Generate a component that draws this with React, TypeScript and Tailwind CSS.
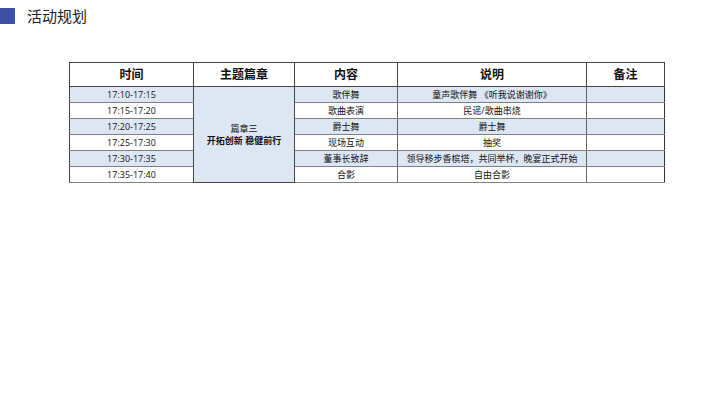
import React from "react";

const rows = [
  { t: "17:10-17:15", c: "歌伴舞", d: "童声歌伴舞 《听我说谢谢你》", blue: true },
  { t: "17:15-17:20", c: "歌曲表演", d: "民谣/歌曲串烧", blue: false },
  { t: "17:20-17:25", c: "爵士舞", d: "爵士舞", blue: true },
  { t: "17:25-17:30", c: "现场互动", d: "抽奖", blue: false },
  { t: "17:30-17:35", c: "董事长致辞", d: "领导移步香槟塔，共同举杯，晚宴正式开始", blue: true },
  { t: "17:35-17:40", c: "合影", d: "自由合影", blue: false },
];

const font = { fontFamily: '"Open Sans", "Noto Sans CJK SC", sans-serif' };

export default function App() {
  return (
    <div className="w-[720px] h-[405px] bg-white relative overflow-hidden" style={font}>
      <div className="flex items-center h-[24px] mt-[4px]">
        <div className="w-[15px] h-[16px] bg-[#3f51a3]" />
        <div className="ml-[12px] text-[15px] leading-none text-[#222]">活动规划</div>
      </div>
      <div className="pl-[69px] pt-[34px]">
        <table className="border-collapse table-fixed w-[595px] text-[#111]">
          <colgroup>
            <col className="w-[124px]" />
            <col className="w-[101px]" />
            <col className="w-[103px]" />
            <col className="w-[189px]" />
            <col className="w-[78px]" />
          </colgroup>
          <thead>
            <tr className="h-[24px] bg-white">
              {["时间", "主题篇章", "内容", "说明", "备注"].map((h) => (
                <th
                  key={h}
                  className="border border-[#444] text-[12px] font-bold text-center align-middle p-0 leading-none"
                >
                  {h}
                </th>
              ))}
            </tr>
          </thead>
          <tbody>
            {rows.map((r, i) => {
              const bg = r.blue ? "bg-[#dde7f3]" : "bg-white";
              return (
                <tr key={i} className="h-[16px]">
                  <td className={`border-y border-[#808080] border-x border-x-[#444] ${bg} text-[9px] text-center p-0 leading-none`}>{r.t}</td>
                  {i === 0 && (
                    <td
                      rowSpan={6}
                      className="border border-[#444] bg-[#dde7f3] text-center align-middle p-0 leading-[12px] text-[9px]"
                    >
                      <div>篇章三</div>
                      <div className="font-bold">开拓创新 稳健前行</div>
                    </td>
                  )}
                  <td className={`border-y border-[#808080] border-x border-x-[#666] ${bg} text-[9px] text-center p-0 leading-none`}>{r.c}</td>
                  <td className={`border-y border-[#808080] border-x border-x-[#666] ${bg} text-[9px] text-center p-0 leading-none`}>{r.d}</td>
                  <td className={`border-y border-[#808080] border-l border-l-[#888] border-r border-r-[#333] ${bg} text-[9px] text-center p-0 leading-none`}></td>
                </tr>
              );
            })}
          </tbody>
        </table>
      </div>
    </div>
  );
}
